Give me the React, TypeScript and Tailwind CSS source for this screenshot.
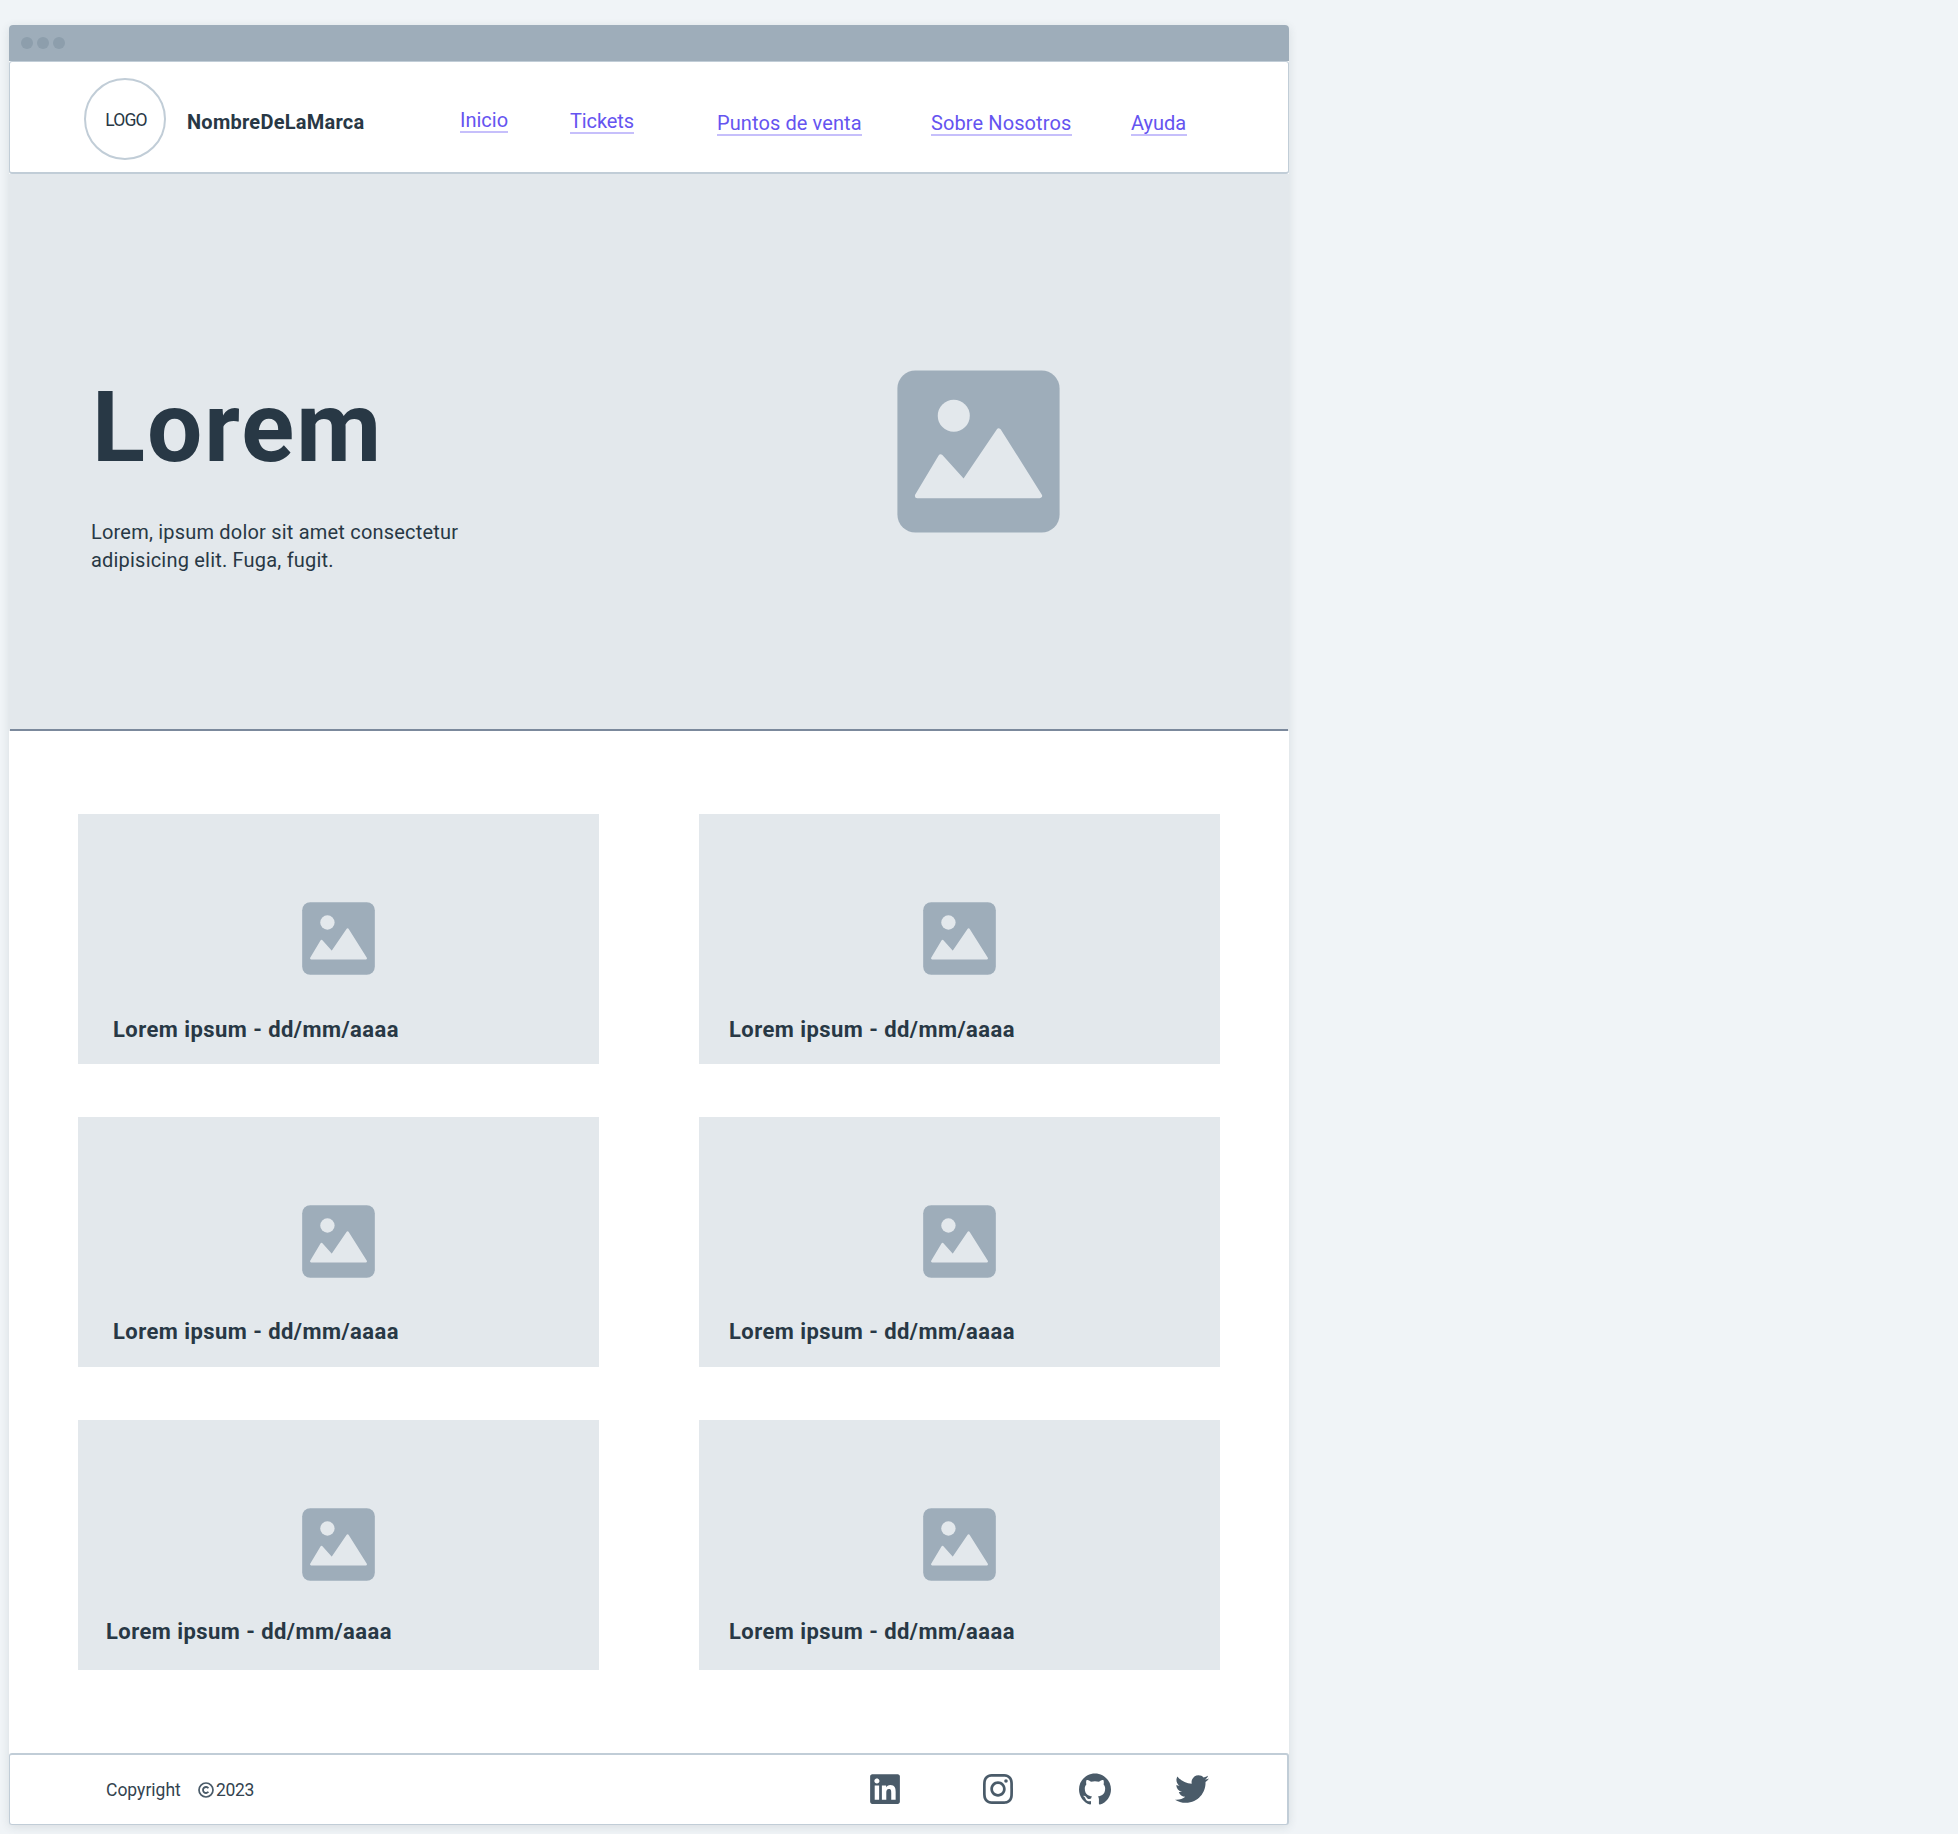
import { FaLinkedin, FaTwitter } from "react-icons/fa";
import { SiInstagram, SiGithub } from "react-icons/si";

function ImageGlyph({ className }: { className: string }) {
  return (
    <svg viewBox="-0.4 -0.4 162.8 162.8" className={className} aria-hidden="true">
      <rect width="162" height="162" rx="18" fill="#9eadba" />
      <g fill="#e3e8ec">
        <circle cx="56.3" cy="45.3" r="16" />
        <path
          d="M20 125.2 43.3 86.3 66.3 112 101.3 60.5 142 125.2Z"
          stroke="#e3e8ec"
          strokeWidth="5"
          strokeLinejoin="round"
        />
      </g>
    </svg>
  );
}

const links = [
  { label: "Inicio", style: "ml-[96px] mb-[39px] w-[48px]" },
  { label: "Tickets", style: "ml-[62px] mb-[38px] w-[64px] tracking-[-0.1px]" },
  { label: "Puntos de venta", style: "ml-[83px] mb-[36px] w-[145px] tracking-[0.1px]" },
  { label: "Sobre Nosotros", style: "ml-[69px] mb-[36px] w-[141px] tracking-[0.1px]" },
  { label: "Ayuda", style: "ml-[59px] mb-[36px] w-[56px]" },
];

const titleStyles = [
  "ml-[35px] mb-[21px]",
  "ml-[30px] mb-[21px]",
  "ml-[35px] mb-[22px]",
  "ml-[30px] mb-[22px]",
  "ml-[28px] mb-[25px]",
  "ml-[30px] mb-[25px]",
];

export default function App() {
  return (
    <div className="h-[1834px] w-[1958px] overflow-hidden bg-[#f0f4f7] pt-[25px] pl-[9px] font-['Roboto',sans-serif] text-[#283845]">
      <div className="flex h-[1800px] w-[1280px] flex-col rounded-[4px] bg-white shadow-[0_2px_10px_rgba(40,56,69,0.12)]">
        <div className="flex h-[36px] shrink-0 items-center gap-1 rounded-t-[4px] bg-[#9eadba] pl-3">
          <span className="size-3 rounded-full bg-[#8d9eac]" />
          <span className="size-3 rounded-full bg-[#8d9eac]" />
          <span className="size-3 rounded-full bg-[#8d9eac]" />
        </div>
        <header className="flex h-[113px] shrink-0 items-end rounded-[3px] border border-b-2 border-[#c1cdd7] whitespace-nowrap">
          <div className="mb-[12px] ml-[74px] flex size-[82px] items-center justify-center rounded-full border-2 border-[#c1cdd7] pt-[2px] pl-[2px] text-[17.5px] tracking-[-0.8px]">
            LOGO
          </div>
          <div className="mb-[36px] ml-[21px] w-[177px] text-[20px] leading-[28px] font-bold tracking-[0.25px]">
            NombreDeLaMarca
          </div>
          {links.map((l) => (
            <a
              key={l.label}
              className={`${l.style} h-[24px] border-b-2 border-[#c6bffb] text-[20px] leading-[22px] text-[#6554f0]`}
            >
              {l.label}
            </a>
          ))}
        </header>
        <section className="h-[557px] shrink-0 bg-[#e3e8ec] px-px">
          <div className="flex h-full border-b-2 border-[#7b899c]">
            <div className="w-[887px] pl-[81px]">
              <h1 className="mt-[199px] ml-[1px] text-[98px] leading-[110px] font-bold tracking-[2px]">Lorem</h1>
              <p className="mt-[35px] w-[420px] text-[20px] leading-[28px] tracking-[0.2px]">
                Lorem, ipsum dolor sit amet consectetur
                <br />
                adipisicing elit. Fuga, fugit.
              </p>
            </div>
            <ImageGlyph className="mt-[196px] size-[163px]" />
          </div>
        </section>
        <main className="grid h-[1022px] shrink-0 grid-cols-[521px_521px] grid-rows-[250px_250px_250px] gap-x-[100px] gap-y-[53px] pt-[83px] pl-[69px]">
          {titleStyles.map((style, i) => (
            <article key={i} className="flex flex-col bg-[#e3e8ec]">
              <div className="flex grow justify-center">
                <ImageGlyph className="mt-[88px] size-[73px]" />
              </div>
              <h2
                className={`${style} text-[22px] leading-[26px] font-bold tracking-[0.44px] whitespace-nowrap`}
              >
                Lorem ipsum - dd/mm/aaaa
              </h2>
            </article>
          ))}
        </main>
        <footer className="flex h-[72px] shrink-0 items-center rounded-[3px] border border-t-2 border-r-2 border-[#c1cdd7] text-[#4a5b69]">
          <span className="ml-[96px] w-[91px] pt-[1px] text-[17.5px] text-[#33434f]">Copyright</span>
          <svg viewBox="0 0 16 16" className="ml-px size-[16px]" fill="none" stroke="currentColor" aria-label="©">
            <circle cx="8" cy="8" r="7" strokeWidth="1.7" />
            <path d="M10.4 6.2A3 3 0 1 0 10.4 9.8" strokeWidth="1.8" />
          </svg>
          <span className="w-[654px] pt-[1px] pl-[2px] text-[17.5px] tracking-[-0.3px] text-[#33434f]">2023</span>
          <div className="mb-[2px] flex items-center">
            <FaLinkedin className="size-[34px]" />
            <SiInstagram className="ml-[81px] size-[30px]" />
            <SiGithub className="ml-[66px] size-[32px]" />
            <FaTwitter className="ml-[64px] size-[34px]" />
          </div>
        </footer>
      </div>
    </div>
  );
}
